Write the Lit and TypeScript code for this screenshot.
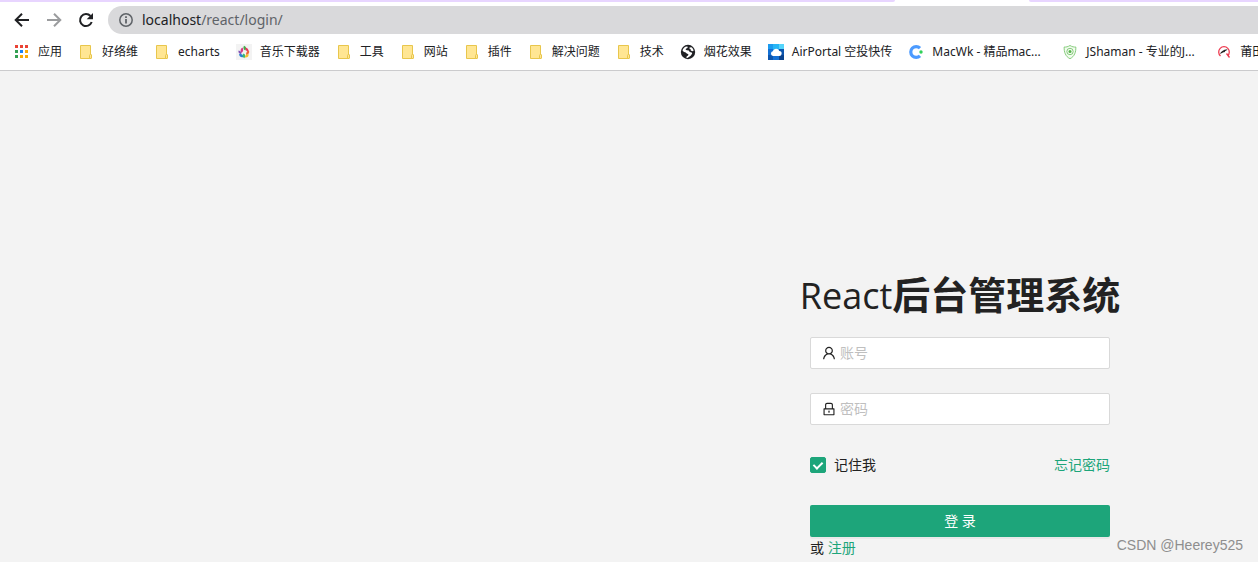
import { LitElement, html, css, svg, TemplateResult } from "lit";
import { customElement } from "lit/decorators.js";
import { classMap } from "lit/directives/class-map.js";

interface Bookmark {
  label: string;
  icon: string;
  capped?: boolean;
}

const bookmarks: Bookmark[] = [
  { label: "应用", icon: "apps" },
  { label: "好络维", icon: "folder" },
  { label: "echarts", icon: "folder" },
  { label: "音乐下载器", icon: "music" },
  { label: "工具", icon: "folder" },
  { label: "网站", icon: "folder" },
  { label: "插件", icon: "folder" },
  { label: "解决问题", icon: "folder" },
  { label: "技术", icon: "folder" },
  { label: "烟花效果", icon: "globe" },
  { label: "AirPortal 空投快传", icon: "cloud" },
  { label: "MacWk - 精品mac...", icon: "macwk", capped: true },
  { label: "JShaman - 专业的J...", icon: "shield", capped: true },
  { label: "莆田", icon: "putian" },
];

const icons: Record<string, TemplateResult> = {
  apps: svg`
    <path fill="#ea4335" d="M1 1h3v3H1zM6 1h3v3H6zM11 1h3v3h-3z"/>
    <path fill="#34a053" d="M1 6h3v3H1zM1 11h3v3H1z"/>
    <path fill="#1a82f7" d="M6 6h3v3H6z"/>
    <path fill="#fbaa05" d="M11 6h3v3h-3zM6 11h3v3H6zM11 11h3v3h-3z"/>`,
  folder: svg`
    <path fill="#ffe693" stroke="#e8c64c" d="M2.500 1.500h10v13h-10z"/>
    <path fill="#ffe693" stroke="#e8c64c" d="M11.500 14.500v-3q0-1 1-1h.500q.500 0 .500.500v3q0 .500-.500.500z"/>`,
  music: svg`
    <path fill="#f3f3f3" d="M0 0h16v16H0z"/>
    <path fill="#3fae49" d="M8 1.800c2.200.6 2.600 2.800 1.400 4.700C7.400 5.700 6.800 3.600 8 1.800z"/>
    <path fill="#e6395c" d="M9.500 3.500c2 .2 3.500 2 3 4.500-2-.2-3.200-2.200-3-4.500z"/>
    <path fill="#d63b86" d="M6.500 3.500c1.200 1.800.9 4.200-1 5.500-1.600-1.800-1-4.500 1-5.500z"/>
    <path fill="#8253b5" d="M2.500 6.500c2.200.2 3.200 2 2.800 4C3.200 9.800 2 8.500 2.500 6.500z"/>
    <path fill="#f0653a" d="M13 6.500c.8 2.400-.6 4.200-2.900 4.500-.3-2.400.8-4.200 2.900-4.500z"/>
    <path fill="#2a80d2" d="M3 10.300c2.400-.8 4.300.4 4.500 2.700-2.300.8-4.100-.2-4.500-2.700z"/>
    <path fill="#3fb96d" d="M7.500 9.500c2 .8 2.200 3 .8 4.700-1.900-1-2.200-3-.8-4.700z"/>
    <path fill="#f4bd2b" d="M12.700 10.300c0 2.300-1.500 3.500-3.800 3.200.1-2.300 1.700-3.500 3.800-3.200z"/>`,
  globe: svg`
    <circle cx="8" cy="8" r="7.200" fill="#202124"/>
    <path fill="#fff" d="M2.500 6.500c.6-1.900 1.900-3.300 3.700-3.900l1.600.2-.4 1.300-1.500.7-.2 1 1.200.5 1.900.2.9 1.500 2 .4.500 1-1.300 2.200-2 1.500-1.600.8-1-.2.500-1.500 1.300-.6.300-1.300-1.600-.7-1.500-1.300-1.300-.3z"/>
    <path fill="#fff" d="M9.500 3.500l1.900-.3c1.300.9 2 2.100 2.200 3.500l-1.300.5-1.500-.7-.2-1.300-1.200-.6z"/>`,
  cloud: svg`
    <path fill="#1470d4" d="M0 0h16v16H0z"/>
    <path fill="#1b9bef" d="M0 0h5v5H0zM5 5h6v6H5z"/>
    <path fill="#28b6f5" d="M5 0h6v5H5z"/>
    <path fill="#55d5fb" d="M11 0h5v5h-5z"/>
    <path fill="#0c55ae" d="M0 11h5v5H0zM11 5h5v6h-5z"/>
    <path fill="#0a438f" d="M11 11h5v5h-5z"/>
    <path fill="#fff" d="M5 12a2.400 2.400 0 01-.2-4.700 3.400 3.400 0 016.500-.3A2.500 2.500 0 0111 12z"/>`,
  macwk: svg`
    <path fill="none" stroke="#4c9bff" stroke-width="3.200" d="M12 4.200A5.400 5.400 0 1012 11.800"/>
    <circle cx="13" cy="8" r="1.700" fill="#2fd158"/>`,
  shield: svg`
    <path fill="#f3fbf0" stroke="#86cd7c" d="M8 1.500c2 1.300 4 1.700 5.800 1.500.3 5-1.300 9.500-5.800 11.700C3.500 12.500 1.900 8 2.200 3 4 3.200 6 2.800 8 1.500z"/>
    <circle cx="8" cy="7.500" r="3.200" fill="none" stroke="#86cd7c"/>
    <circle cx="8" cy="7.500" r="1.500" fill="#56b54b"/>`,
  putian: svg`
    <path fill="none" stroke="#ee3b50" stroke-width="1.300" d="M4.500 12A5.300 5.300 0 1111.500 12M10.500 9.500l3 4"/>
    <path fill="#222" d="M4 10c.8-2.500 3-4.300 7.500-4.800-.8 1-1.200 1.500-2.500 2 .1.800-.4 1-1.500 1.100z"/>`,
};

@customElement("app-root")
export class AppRoot extends LitElement {
  static styles = css`
    :host {
      display: flex;
      flex-direction: column;
      position: relative;
      min-height: 100vh;
      overflow: hidden;
      box-sizing: border-box;
      background: #f3f3f3;
      color: #202124;
      font-family: "Noto Sans", "Noto Sans CJK SC", sans-serif;
    }
    * {
      box-sizing: border-box;
    }
    a {
      text-decoration: none;
    }
    .browser {
      background: #fff;
      border-bottom: 1px solid #cbcbcd;
    }
    .tabs {
      display: flex;
      height: 2px;
    }
    .tab-rest {
      flex: 1;
      background: #e8d5ff;
      border-bottom-right-radius: 2px;
    }
    .tab-active {
      width: 134px;
    }
    .tab-end {
      width: 229px;
      background: #e8d5ff;
      border-bottom-left-radius: 2px;
    }
    .toolbar {
      display: flex;
      align-items: center;
      padding: 4px 0 0 6px;
    }
    .tool {
      display: flex;
      justify-content: center;
      width: 32px;
      padding: 0;
      border: 0;
      background: none;
      color: #202124;
    }
    .tool:disabled {
      color: #9b9c9e;
    }
    .address {
      display: flex;
      flex: 1;
      align-items: center;
      gap: 8px;
      height: 28px;
      margin-left: 6px;
      padding-left: 10px;
      border-radius: 14px 0 0 14px;
      background: #d9d9db;
      font-size: 14px;
      line-height: 20px;
    }
    .path {
      color: #5f6368;
    }
    .bookmarks {
      display: flex;
      gap: 16px;
      height: 36px;
      padding-left: 14px;
      overflow: hidden;
    }
    .bookmark {
      display: flex;
      flex: none;
      align-items: center;
      gap: 8px;
      color: #202124;
      font-size: 12px;
      line-height: 18px;
      white-space: nowrap;
    }
    .capped {
      width: 138px;
    }
    .page {
      display: flex;
      justify-content: flex-end;
      padding: 200px 148px 0 0;
    }
    .login {
      width: 300px;
      color: #222;
      font-size: 14px;
      line-height: 22px;
    }
    .title {
      display: flex;
      justify-content: center;
      align-items: baseline;
      margin: 0 -12px 18px;
      font-family: "Open Sans", "Noto Sans CJK SC", sans-serif;
      font-size: 38px;
      line-height: 46px;
      font-weight: 700;
      white-space: nowrap;
    }
    .latin {
      font-size: 36px;
      font-weight: 400;
    }
    .field {
      display: flex;
      align-items: center;
      gap: 4px;
      height: 32px;
      margin-bottom: 24px;
      padding: 0 11px;
      border: 1px solid #d9d9d9;
      border-radius: 2px;
      background: #fff;
    }
    .field input {
      flex: 1;
      min-width: 0;
      padding: 0;
      border: 0;
      outline: 0;
      background: none;
      font: inherit;
    }
    .field input::placeholder {
      color: #bfbfbf;
    }
    .options {
      display: flex;
      justify-content: space-between;
      align-items: center;
      height: 32px;
      margin-bottom: 24px;
    }
    .remember {
      display: flex;
      align-items: center;
      gap: 8px;
    }
    .check {
      display: grid;
      place-items: center;
      width: 16px;
      height: 16px;
      margin: 0;
      appearance: none;
      border: 1px solid #d9d9d9;
      border-radius: 2px;
      background: #fff;
    }
    .check:checked {
      border-color: #1da57a;
      background: #1da57a;
    }
    .check:checked::after {
      content: "";
      box-sizing: border-box;
      width: 6px;
      height: 9px;
      margin-bottom: 2px;
      border: solid #fff;
      border-width: 0 2px 2px 0;
      transform: rotate(45deg);
    }
    .link {
      color: #1da57a;
    }
    .submit {
      display: block;
      width: 100%;
      height: 32px;
      padding: 0;
      border: 0;
      border-radius: 2px;
      background: #1da57a;
      box-shadow: 0 2px 0 rgba(0, 0, 0, 0.04);
      color: #fff;
      font: inherit;
    }
    .credit {
      position: absolute;
      right: 15px;
      bottom: 8px;
      color: #8e8e8e;
      font-family: "Liberation Sans", sans-serif;
      font-size: 14px;
      line-height: 18px;
    }
  `;

  render() {
    return html`
      <header class="browser">
        <div class="tabs">
          <div class="tab-rest"></div>
          <div class="tab-active"></div>
          <div class="tab-end"></div>
        </div>
        <div class="toolbar">
          <button class="tool" aria-label="后退">
            <svg width="16" height="16" fill="none" stroke="currentColor" stroke-width="2">
              <path d="M15 8H2.500M8 1.700L1.700 8 8 14.300" />
            </svg>
          </button>
          <button class="tool" aria-label="前进" disabled>
            <svg width="16" height="16" fill="none" stroke="currentColor" stroke-width="2">
              <path d="M1 8h12.500M8 1.700L14.300 8 8 14.300" />
            </svg>
          </button>
          <button class="tool" aria-label="重新加载">
            <svg width="16" height="16" fill="none" stroke="currentColor" stroke-width="2">
              <path d="M13.700 10A6 6 0 1112.500 4" />
              <path d="M15 1v6.300H8.700z" fill="currentColor" stroke="none" />
            </svg>
          </button>
          <div class="address">
            <svg width="16" height="16" fill="none" stroke="#5f6368">
              <circle cx="8" cy="8" r="6.200" stroke-width="1.500" />
              <path d="M8 7v4.500M8 4.300v1.700" stroke-width="1.800" />
            </svg>
            <span>localhost<span class="path">/react/login/</span></span>
          </div>
        </div>
        <nav class="bookmarks">
          ${bookmarks.map(
            (b) => html`<a class=${classMap({ bookmark: true, capped: !!b.capped })} href="#">
              <svg width="16" height="16" viewBox="0 0 16 16">${icons[b.icon]}</svg>
              <span>${b.label}</span>
            </a>`
          )}
        </nav>
      </header>
      <main class="page">
        <form class="login">
          <h1 class="title"><span class="latin">React</span>后台管理系统</h1>
          <label class="field">
            <svg width="14" height="14" viewBox="64 64 896 896" fill="currentColor">
              <path d="M858.500 763.600a374 374 0 00-80.600-119.500 375.630 375.630 0 00-119.500-80.600c-.4-.2-.8-.3-1.200-.5C719.500 518 760 444.700 760 362c0-137-111-248-248-248S264 225 264 362c0 82.700 40.500 156 102.800 201.100-.4.2-.8.3-1.200.5-44.800 18.900-85 46-119.500 80.600a375.630 375.630 0 00-80.600 119.500A371.700 371.700 0 00136 901.800a8 8 0 008 8.200h60c4.400 0 7.900-3.500 8-7.800 2-77.200 33-149.500 87.800-204.300 56.700-56.700 132-87.900 212.200-87.900s155.500 31.200 212.200 87.900C779 752.700 810 825 812 902.200c.1 4.400 3.600 7.800 8 7.800h60a8 8 0 008-8.200c-1-47.800-10.900-94.300-29.500-138.200zM512 534c-45.900 0-89.100-17.900-121.600-50.400S340 407.900 340 362c0-45.900 17.900-89.100 50.400-121.600S466.100 190 512 190s89.100 17.900 121.600 50.400S684 316.100 684 362c0 45.900-17.900 89.100-50.400 121.600S557.900 534 512 534z" />
            </svg>
            <input type="text" placeholder="账号" aria-label="账号" />
          </label>
          <label class="field">
            <svg width="14" height="14" viewBox="64 64 896 896" fill="currentColor">
              <path d="M832 464h-68V240c0-70.700-57.300-128-128-128H388c-70.700 0-128 57.300-128 128v224h-68c-17.700 0-32 14.300-32 32v384c0 17.700 14.300 32 32 32h640c17.700 0 32-14.300 32-32V496c0-17.700-14.300-32-32-32zM332 240c0-30.900 25.100-56 56-56h248c30.900 0 56 25.100 56 56v224H332V240zm460 600H232V536h560v304zM484 701v53c0 4.400 3.600 8 8 8h40c4.400 0 8-3.600 8-8v-53a48.010 48.010 0 10-56 0z" />
            </svg>
            <input type="password" placeholder="密码" aria-label="密码" />
          </label>
          <div class="options">
            <label class="remember"><input class="check" type="checkbox" checked />记住我</label>
            <a class="link" href="#">忘记密码</a>
          </div>
          <button class="submit" type="button">登 录</button>
          <div>或 <a class="link" href="#">注册</a></div>
        </form>
      </main>
      <div class="credit">CSDN @Heerey525</div>
    `;
  }
}
